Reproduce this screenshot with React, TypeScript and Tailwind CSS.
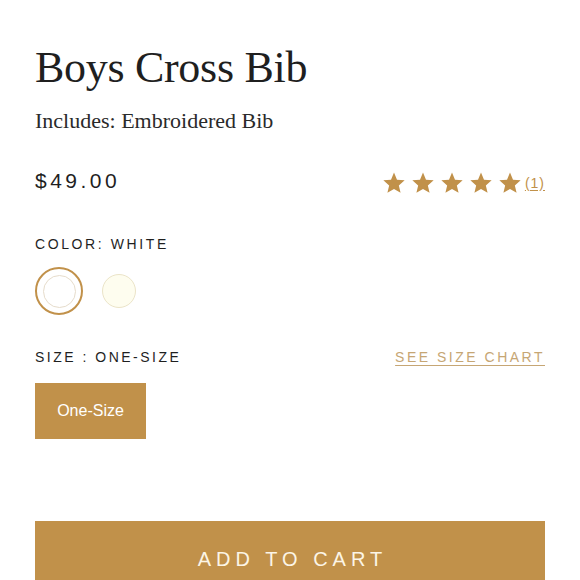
const gold = "bg-[#c1914a]";

const starPoints = Array.from({ length: 10 }, (_, i) => {
  const r = i % 2 === 0 ? 11.2 : 5.1;
  const a = (Math.PI / 5) * i - Math.PI / 2;
  return `${(12 + r * Math.cos(a)).toFixed(2)},${(12.8 + r * Math.sin(a)).toFixed(2)}`;
}).join(" ");

function Star() {
  return (
    <svg viewBox="0 0 24 24" className="h-[24px] w-[24px] fill-[#c1914a]">
      <polygon points={starPoints} strokeLinejoin="miter" />
    </svg>
  );
}

export default function App() {
  return (
    <div className="h-[580px] w-[580px] overflow-hidden bg-white px-[35px] pt-[42px] text-[#1f1f1f]">
      <h1 className="font-['Liberation_Serif',serif] text-[44px] font-normal leading-[52px] tracking-[-0.3px]">
        Boys Cross Bib
      </h1>
      <p className="mt-[13px] font-['Liberation_Serif',serif] text-[22px] leading-[28px] text-[#2a2a2a]">
        Includes: Embroidered Bib
      </p>

      <div className="mt-[34px] flex h-[24px] items-center justify-between font-['Liberation_Sans',sans-serif]">
        <span className="text-[21px] leading-[24px] tracking-[3.5px]">$49.00</span>
        <div className="mt-[4px] flex items-center">
          <div className="flex gap-[5px]">
            <Star />
            <Star />
            <Star />
            <Star />
            <Star />
          </div>
          <a className="ml-[3px] text-[14px] tracking-[1px] text-[#c1914a] underline underline-offset-2">(1)</a>
        </div>
      </div>

      <div className="mt-[41px] font-['Liberation_Sans',sans-serif] text-[14px] leading-[20px] tracking-[2.6px]">
        COLOR: WHITE
      </div>

      <div className="mt-[13px] flex gap-3">
        <button className="flex h-[48px] w-[48px] items-center justify-center rounded-full border-2 border-[#c1914a]">
          <span className="h-[33px] w-[33px] rounded-full border border-[#e6dccb] bg-white" />
        </button>
        <button className="flex h-[48px] w-[48px] items-center justify-center rounded-full">
          <span className="h-[34px] w-[34px] rounded-full border border-[#ebe4c8] bg-[#fefdef]" />
        </button>
      </div>

      <div className="mt-[32px] flex items-center justify-between font-['Liberation_Sans',sans-serif] text-[14px] leading-[20px] tracking-[2.5px]">
        <span>SIZE : ONE-SIZE</span>
        <a className="text-[#c6a674] underline underline-offset-[3px]">SEE SIZE CHART</a>
      </div>

      <button
        className={`mt-4 flex h-[56px] w-[111px] items-center justify-center ${gold} font-['Liberation_Sans',sans-serif] text-[16px] text-white`}
      >
        One-Size
      </button>

      <button
        className={`mt-[82px] flex h-[76px] w-full items-center justify-center ${gold} pl-[5px] font-['Liberation_Sans',sans-serif] text-[20px] tracking-[5px] text-[#fcf5e6]`}
      >
        ADD TO CART
      </button>
    </div>
  );
}
